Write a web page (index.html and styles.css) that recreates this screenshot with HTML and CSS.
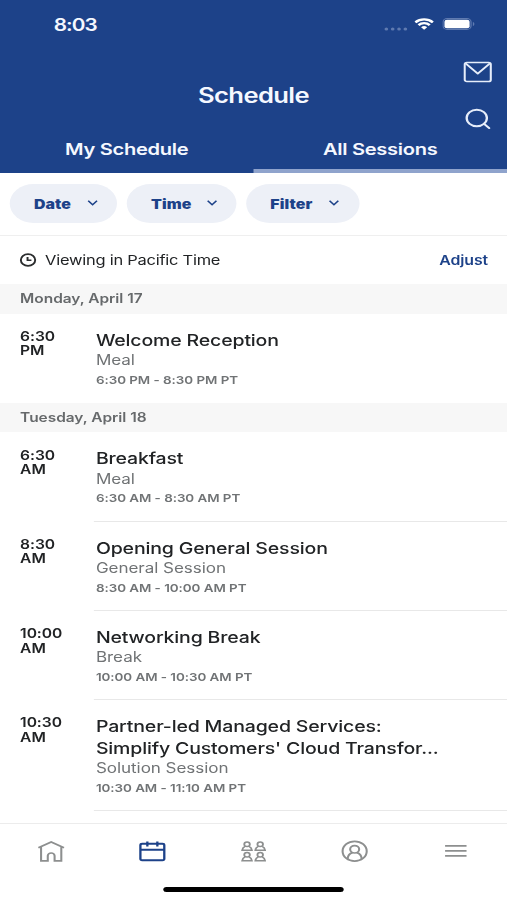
FILE: index.html
```html
<!DOCTYPE html>
<html lang="en">
<head>
<meta charset="utf-8">
<title>Schedule</title>
<link rel="stylesheet" href="styles.css">
</head>
<body>
<div class="screen">
  <header class="header">
    <div class="status">
      <span class="clock">8:03</span>
      <span class="indicators">
        <svg class="dots" width="20" height="4" viewBox="0 0 20 4"><g fill="#5f7ab0"><circle cx="2" cy="2" r="1.5"/><circle cx="7.2" cy="2" r="1.5"/><circle cx="12.4" cy="2" r="1.5"/><circle cx="17.6" cy="2" r="1.5"/></g></svg>
        <svg class="wifi" width="16" height="12" viewBox="0 0 16 12" fill="none" stroke="#fff" stroke-width="2.2"><path d="M.8 4.4a10.2 10.2 0 0 1 14.4 0"/><path d="M3.4 7.1a6.5 6.5 0 0 1 9.2 0"/><path d="M8 11.8 5.5 9.2a3.6 3.6 0 0 1 5 0z" fill="#fff" stroke="none"/></svg>
        <svg class="battery" width="27" height="12" viewBox="0 0 27 12"><rect x=".5" y=".5" width="23" height="11" rx="3.4" fill="none" stroke="#5f7ab0"/><rect x="1.700" y="1.700" width="20.600" height="8.600" rx="2" fill="#fff"/><path d="M25 4v4c1.600-.6 1.600-3.400 0-4z" fill="#5f7ab0"/></svg>
      </span>
    </div>
    <h1 class="title">Schedule</h1>
    <div class="actions">
      <svg width="24" height="22" viewBox="0 0 24 22" fill="none" stroke="#e6edfa" stroke-width="1.7" stroke-linejoin="round"><rect x="1.300" y="1.500" width="21.400" height="19" rx="1.800"/><path d="M2 2.400 12 12.600 22 2.400"/></svg>
      <svg width="24" height="22" viewBox="0 0 24 22" fill="none" stroke="#e6edfa" stroke-width="1.900" stroke-linecap="round"><circle cx="11.200" cy="10" r="8.300"/><path d="m17.200 15.800 4.200 4.300"/></svg>
    </div>
    <nav class="tabs">
      <span class="tab">My Schedule</span>
      <span class="tab tab-active">All Sessions</span>
    </nav>
  </header>

  <div class="filters">
    <span class="pill pill-date">Date<svg class="chev" width="10" height="6" viewBox="0 0 10 6"><path d="M1.400.8 5 4.700 8.600.8"/></svg></span>
    <span class="pill pill-time">Time<svg class="chev" width="10" height="6" viewBox="0 0 10 6"><path d="M1.400.8 5 4.700 8.600.8"/></svg></span>
    <span class="pill pill-filter">Filter<svg class="chev" width="10" height="6" viewBox="0 0 10 6"><path d="M1.400.8 5 4.700 8.600.8"/></svg></span>
  </div>

  <div class="zone">
    <svg width="14" height="14" viewBox="0 0 14 14" fill="none" stroke="#2b2d2e" stroke-width="1.600"><circle cx="7" cy="7" r="5.900"/><path d="M6.600 4v3.300h3.200"/></svg>
    <span class="zone-text">Viewing in Pacific Time</span>
    <span class="adjust">Adjust</span>
  </div>

  <main class="list">
    <h2 class="day">Monday, April 17</h2>
    <article class="row">
      <div class="start">6:30<br>PM</div>
      <div class="info info-last"><h3>Welcome Reception</h3><p class="kind">Meal</p><p class="span">6:30 PM - 8:30 PM PT</p></div>
    </article>
    <h2 class="day">Tuesday, April 18</h2>
    <article class="row">
      <div class="start">6:30<br>AM</div>
      <div class="info"><h3>Breakfast</h3><p class="kind">Meal</p><p class="span">6:30 AM - 8:30 AM PT</p></div>
    </article>
    <article class="row">
      <div class="start">8:30<br>AM</div>
      <div class="info"><h3>Opening General Session</h3><p class="kind">General Session</p><p class="span">8:30 AM - 10:00 AM PT</p></div>
    </article>
    <article class="row">
      <div class="start">10:00<br>AM</div>
      <div class="info"><h3>Networking Break</h3><p class="kind">Break</p><p class="span">10:00 AM - 10:30 AM PT</p></div>
    </article>
    <article class="row">
      <div class="start">10:30<br>AM</div>
      <div class="info"><h3>Partner-led Managed Services:<br>Simplify Customers' Cloud Transfor...</h3><p class="kind">Solution Session</p><p class="span">10:30 AM - 11:10 AM PT</p></div>
    </article>
  </main>

  <footer class="bottom">
    <nav class="nav">
      <svg width="24" height="24" viewBox="0 0 24 24"><path d="M1.500 8.800 12 2.900l10.500 5.900M3.700 7.800v14h5.500v-5a2.800 2.800 0 0 1 5.600 0v5h5.500v-14"/></svg>
      <svg class="current" width="24" height="24" viewBox="0 0 24 24"><rect x="2.200" y="4.700" width="19.600" height="16.600" rx="1.500"/><path d="M2.200 10.800h19.600M7.900 2.500v5M16.100 2.500v5"/></svg>
      <svg class="people" width="24" height="24" viewBox="0 0 24 24"><defs><g id="person"><circle cx="4.500" cy="2.900" r="2.300"/><path d="M2.900 4.900C1.300 5.700.700 6.900.500 8.900h8C8.300 6.900 7.700 5.700 6.100 4.900"/></g></defs><use href="#person" x="2.200" y="2.400"/><use href="#person" x="13" y="2.400"/><use href="#person" x="2.200" y="12.900"/><use href="#person" x="13" y="12.900"/></svg>
      <svg width="24" height="24" viewBox="0 0 24 24"><circle cx="12" cy="12.200" r="9.900"/><circle cx="12" cy="10.300" r="3.700"/><path d="M6.200 20c.200-3.400 1.700-5.600 4-6.400M17.800 20c-.200-3.400-1.700-5.600-4-6.400"/></svg>
      <svg width="24" height="24" viewBox="0 0 24 24"><path d="M3.200 6.900h17.600M3.200 11.900h17.600M3.200 16.800h17.600"/></svg>
    </nav>
    <div class="home-bar"></div>
  </footer>
</div>
</body>
</html>
```

FILE: styles.css
```css
* { box-sizing: border-box; }
html, body { margin: 0; background: #fff; overflow: hidden; }
h1, h2, h3, p { margin: 0; }

/* 416 units wide, stretched horizontally to fill the 507px viewport */
.screen {
  width: 416px;
  height: 900px;
  display: flex;
  flex-direction: column;
  transform: scaleX(1.21875);
  transform-origin: 0 0;
  font-family: Inter, "Liberation Sans", sans-serif;
  color: #212325;
}
svg { display: block; flex: none; }

.header { position: relative; height: 172.5px; flex: none; background: #1d4289; color: #f5f8ff; }
.status { display: flex; justify-content: space-between; height: 48px; padding: 0 26px 0 44px; }
.clock { font-size: 17px; font-weight: 600; line-height: 50px; letter-spacing: -.7px; }
.indicators { display: flex; align-items: flex-start; padding-top: 18.4px; }
.dots { margin: 8.2px 5.5px 0 0; }
.wifi { margin-right: 7px; }
.title { height: 76px; padding-top: 35px; text-align: center; font-size: 21px; line-height: 26px; font-weight: 600; letter-spacing: -.5px; }
.actions { position: absolute; right: 11.8px; top: 60.500px; display: flex; flex-direction: column; gap: 25px; }
.tabs { display: flex; height: 48.500px; }
.tab { flex: 1; text-align: center; font-size: 16.500px; font-weight: 600; line-height: 51px; letter-spacing: -.25px; }
.tab-active { border-bottom: 4px solid #8fa3cc; }

.filters { display: flex; gap: 8px; height: 63px; flex: none; padding: 11.500px 8.300px 0; border-bottom: 1.500px solid #efefef; }
.pill { display: flex; align-items: center; height: 39px; border-radius: 20px; background: #edf0f7; color: #1d4289; font-size: 13px; font-weight: 900; line-height: 38px; letter-spacing: .1px; padding: 0 15.500px 0 19.500px; justify-content: space-between; }
.pill-date { width: 88px; }
.pill-time { width: 90px; }
.pill-filter { width: 92.500px; }
.chev { margin-bottom: 1px; }
.chev path { fill: none; stroke: #1d4289; stroke-width: 1.300; }

.zone { display: flex; align-items: center; height: 48.500px; flex: none; padding: 0 15.500px 0 15.500px; font-size: 13.500px; letter-spacing: -.2px; }
.zone svg { margin-right: 7.500px; }
.adjust { margin-left: auto; color: #1d4289; font-weight: 600; font-size: 13px; letter-spacing: -.05px; }

.list { flex: none; height: 539px; overflow: hidden; }
.day { height: 29.500px; padding-left: 16.500px; background: #f7f7f7; color: #66696b; font-size: 12.700px; line-height: 30px; font-weight: 600; letter-spacing: -.03px; }
.row { display: flex; padding-left: 16.500px; }
.start { width: 60px; flex: none; padding-top: 16.300px; font-size: 12.800px; line-height: 14.500px; font-weight: 600; letter-spacing: -.05px; }
.info { flex: 1; margin: 0; padding: 16px 0 11.500px 2.200px; border-bottom: 1px solid #e8e8e8; }
.info-last { border-color: transparent; }
.info h3 { font-size: 16px; line-height: 21.500px; font-weight: 500; white-space: nowrap; letter-spacing: -.13px; }
.kind { font-size: 14px; line-height: 18.600px; color: #707375; letter-spacing: -.05px; }
.span { font-size: 11px; line-height: 20.700px; font-weight: 600; color: #707375; letter-spacing: -.04px; }

.bottom { flex: 1; border-top: 1px solid #ececec; display: flex; flex-direction: column; align-items: center; }
.nav { width: 100%; height: 63px; padding-top: 15px; display: grid; grid-template-columns: repeat(5, 1fr); justify-items: center; }
.nav svg { fill: none; stroke: #8d8f8f; stroke-width: 1.700; }
.nav .current { stroke: #1d4289; stroke-width: 1.900; }
.nav .people { stroke-width: 1.500; }
.home-bar { width: 148px; height: 5px; border-radius: 3px; background: #000; }
```
